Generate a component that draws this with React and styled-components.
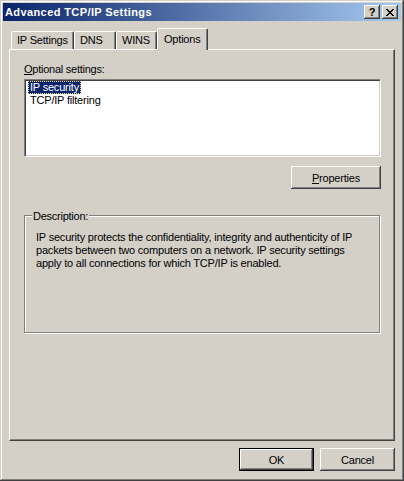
import React from 'react';
import styled, { createGlobalStyle } from 'styled-components';

const GlobalStyle = createGlobalStyle`
  html, body {
    margin: 0;
    padding: 0;
    background: #d4d0c8;
  }
  body {
    font-family: 'Liberation Sans', Arial, sans-serif;
    font-size: 11px;
    color: #000;
  }
`

const Window = styled.div`
  box-sizing: border-box;
  width: 404px;
  height: 481px;
  padding: 3px;
  background: #d4d0c8;
  box-shadow: inset -1px -1px #404040, inset 1px 1px #d4d0c8,
    inset -2px -2px #808080, inset 2px 2px #fff;
  display: flex;
  flex-direction: column;
`

const TitleBar = styled.div`
  height: 18px;
  display: flex;
  align-items: center;
  padding: 0 3px 0 2px;
  background: linear-gradient(to right, #0a246a, #a6caf0);
`

const TitleText = styled.span`
  flex: 1;
  color: #fff;
  font-weight: bold;
  font-size: 11px;
  letter-spacing: 0.4px;
  line-height: 18px;
`

const CaptionButton = styled.button`
  box-sizing: border-box;
  width: 16px;
  height: 14px;
  margin-left: ${props => props.gap || 0}px;
  padding: 0;
  border: none;
  background: #d4d0c8;
  box-shadow: inset -1px -1px #404040, inset 1px 1px #fff,
    inset -2px -2px #808080, inset 2px 2px #d4d0c8;
  display: flex;
  align-items: center;
  justify-content: center;
  font-family: 'Liberation Sans', Arial, sans-serif;
  font-weight: bold;
  font-size: 11px;
  line-height: 11px;
  color: #000;
`

const Body = styled.div`
  flex: 1;
  display: flex;
  flex-direction: column;
  padding: 7px 6px;
`

const TabStrip = styled.div`
  height: 21px;
  display: flex;
  align-items: flex-end;
  padding-left: 2px;
`

const Tab = styled.div`
  box-sizing: border-box;
  width: ${props => props.width}px;
  height: ${props => (props.active ? 22 : 18)}px;
  margin-bottom: ${props => (props.active ? -1 : 0)}px;
  position: ${props => (props.active ? 'relative' : 'static')};
  z-index: ${props => (props.active ? 1 : 0)};
  padding-left: ${props => (props.active ? 6 : 5)}px;
  background: #d4d0c8;
  border-left: 1px solid #fff;
  border-top: 1px solid #fff;
  border-right: 1px solid #404040;
  border-radius: 2px 2px 0 0;
  box-shadow: inset -1px 0 #808080;
  display: flex;
  align-items: center;
  line-height: 13px;
  letter-spacing: -0.2px;
  white-space: nowrap;
`

const TabPanel = styled.div`
  box-sizing: border-box;
  height: 392px;
  border: 1px solid;
  border-color: #fff #404040 #404040 #fff;
  box-shadow: inset -1px -1px #808080;
  padding: 13px 13px 0 14px;
  display: flex;
  flex-direction: column;
`

const FieldLabel = styled.div`
  line-height: 13px;
  margin-bottom: 3px;
  letter-spacing: -0.25px;
`

const ListBox = styled.div`
  box-sizing: border-box;
  height: 78px;
  background: #fff;
  border: 1px solid;
  border-color: #808080 #fff #fff #808080;
  box-shadow: inset 1px 1px #404040, inset -1px -1px #d4d0c8;
  padding: 1px 0 0 3px;
  display: flex;
  flex-direction: column;
  align-items: flex-start;
`

const ListItem = styled.div`
  box-sizing: border-box;
  height: 13px;
  line-height: 13px;
  padding: 0 2px;
  letter-spacing: -0.2px;
  white-space: nowrap;
  background: ${props => (props.selected ? '#0a246a' : 'transparent')};
  color: ${props => (props.selected ? '#fff' : '#000')};
  outline: ${props => (props.selected ? '1px dotted #f0d890' : 'none')};
  outline-offset: -1px;
`

const ButtonRow = styled.div`
  display: flex;
  justify-content: flex-end;
  gap: 6px;
  margin-top: ${props => props.top}px;
`

const PushButton = styled.button`
  box-sizing: border-box;
  width: ${props => props.width}px;
  height: 23px;
  padding: 0;
  background: #d4d0c8;
  border: ${props => (props.primary ? '1px solid #000' : 'none')};
  box-shadow: ${props =>
    props.primary
      ? 'inset -1px -1px #404040, inset 1px 1px #fff, inset -2px -2px #808080'
      : 'inset -1px -1px #404040, inset 1px 1px #fff, inset -2px -2px #808080, inset 2px 2px #d4d0c8'};
  font-family: 'Liberation Sans', Arial, sans-serif;
  font-size: 11px;
  letter-spacing: -0.2px;
  color: #000;
`

const GroupBox = styled.div`
  box-sizing: border-box;
  width: 356px;
  height: 118px;
  margin-top: 26px;
  border: 1px solid #808080;
  box-shadow: inset 1px 1px #fff, 1px 1px #fff;
  display: flex;
  flex-direction: column;
  align-items: flex-start;
`

const GroupLabel = styled.div`
  margin: -6px 0 0 7px;
  padding: 0 1px;
  background: #d4d0c8;
  line-height: 13px;
  letter-spacing: -0.25px;
`

const Description = styled.div`
  margin: 8px 0 0 11px;
  line-height: 13px;
  letter-spacing: -0.2px;
  white-space: nowrap;
`

const CloseGlyph = () => (
  <svg width="8" height="7" viewBox="0 0 8 7" shapeRendering="crispEdges">
    <path
      d="M0 0h2v1h-2zM6 0h2v1h-2zM1 1h2v1h-2zM5 1h2v1h-2zM2 2h4v1h-4zM3 3h2v1h-2zM2 4h4v1h-4zM1 5h2v1h-2zM5 5h2v1h-2zM0 6h2v1h-2zM6 6h2v1h-2z"
      fill="#000"
    />
  </svg>
)

const tabs = [
  { label: 'IP Settings', width: 63 },
  { label: 'DNS', width: 42 },
  { label: 'WINS', width: 41 },
  { label: 'Options', width: 51, active: true },
]

export default function App() {
  return (
    <>
      <GlobalStyle />
      <Window>
        <TitleBar>
          <TitleText>Advanced TCP/IP Settings</TitleText>
          <CaptionButton>?</CaptionButton>
          <CaptionButton gap={2}>
            <CloseGlyph />
          </CaptionButton>
        </TitleBar>
        <Body>
          <TabStrip>
            {tabs.map(tab => (
              <Tab key={tab.label} width={tab.width} active={tab.active}>
                {tab.label}
              </Tab>
            ))}
          </TabStrip>
          <TabPanel>
            <FieldLabel>
              <u>O</u>ptional settings:
            </FieldLabel>
            <ListBox>
              <ListItem selected>IP security</ListItem>
              <ListItem>TCP/IP filtering</ListItem>
            </ListBox>
            <ButtonRow top={9}>
              <PushButton width={90}>
                <u>P</u>roperties
              </PushButton>
            </ButtonRow>
            <GroupBox>
              <GroupLabel>Description:</GroupLabel>
              <Description>
                IP security protects the confidentiality, integrity and authenticity of IP
                <br />
                packets between two computers on a network. IP security settings
                <br />
                apply to all connections for which TCP/IP is enabled.
              </Description>
            </GroupBox>
          </TabPanel>
          <ButtonRow top={7}>
            <PushButton width={75} primary>
              OK
            </PushButton>
            <PushButton width={75}>Cancel</PushButton>
          </ButtonRow>
        </Body>
      </Window>
    </>
  )
}
